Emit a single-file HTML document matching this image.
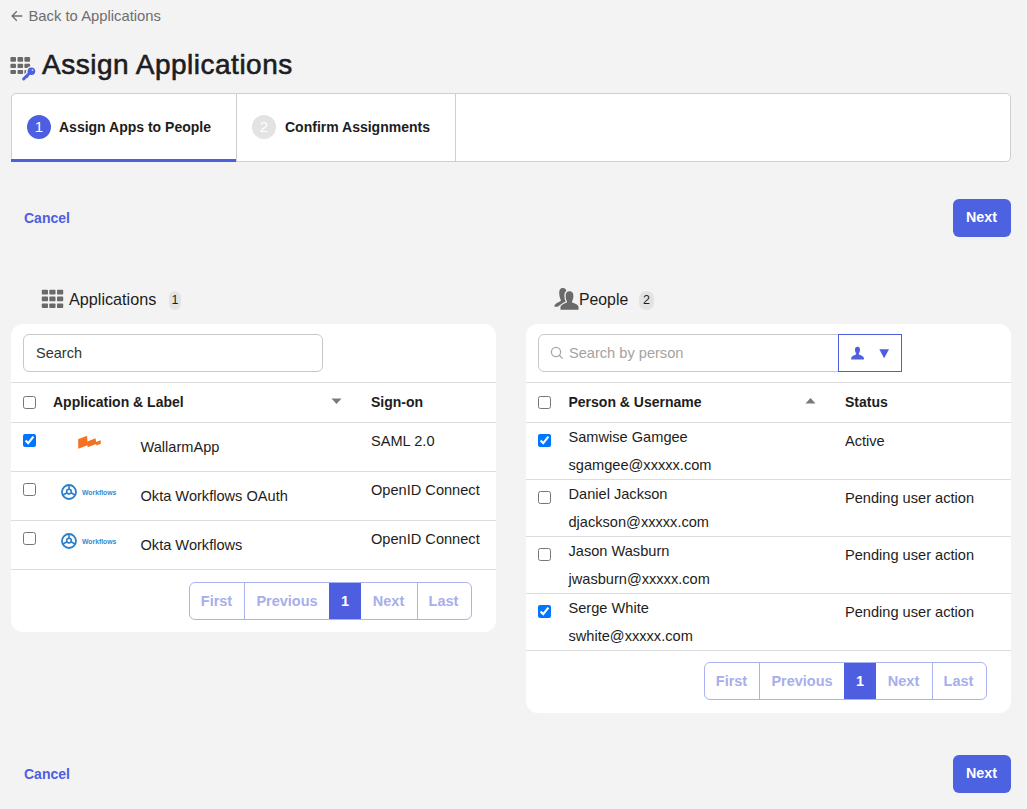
<!DOCTYPE html>
<html><head><meta charset="utf-8">
<style>
*{box-sizing:border-box;margin:0;padding:0}
html,body{width:1027px;height:809px;overflow:hidden;background:#f3f3f3;font-family:"Liberation Sans",sans-serif;color:#1d1d21}
.abs{position:absolute}
.t{position:absolute;white-space:nowrap;line-height:1}
.back{left:28.5px;top:8.5px;font-size:14.8px;color:#6e6e6e}
.title{left:42px;top:51px;font-size:28px;letter-spacing:0.5px;-webkit-text-stroke:0.6px #1d1d21;color:#1d1d21}
.tabs{left:11px;top:93px;width:1000px;height:69px;background:#fff;border:1px solid #cfcfcf;border-radius:5px;overflow:hidden}
.tab1bar{left:0;top:65px;width:225px;height:3px;background:#4e5ee0}
.sep{top:0;width:1px;height:68px;background:#cfcfcf}
.circ{width:24px;height:24px;border-radius:50%;text-align:center;line-height:24px;font-size:15px;font-weight:400;color:#fff}
.tabtxt{font-size:14px;font-weight:700;color:#1d1d21}
.cancel{font-size:14px;font-weight:700;color:#4e5ee0}
.btn{width:58px;height:38px;background:#4d62e0;border-radius:6px;color:#fff;font-size:14.3px;font-weight:700;text-align:center;line-height:37px;padding-right:1px}
.panel{background:#fff;border-radius:12px}
.input{border:1px solid #c8c8c8;border-radius:6px;background:#fff}
.hline{position:absolute;height:1px;background:#dcdcdc}
.th{font-size:14px;font-weight:700;color:#1d1d21}
.td{font-size:14.6px;color:#1d1d21}
.badge{position:absolute;height:19px;border-radius:7px;background:#e3e3e3;font-size:12.5px;text-align:center;line-height:19px;color:#1d1d21}
.pg{position:absolute;height:38px;border:1px solid #aab2f0;border-radius:6px;overflow:hidden;background:#fff}
.pg div{position:absolute;top:0;height:36px;line-height:36px;text-align:center;font-size:14.5px;font-weight:700;color:#a7aeea}
.pg div.s{border-left:1px solid #aab2f0}
.pg div.cur{background:#4e5ee0;color:#fff}
input[type=checkbox]{position:absolute;width:13px;height:13px;margin:0}
</style></head>
<body>
<svg class="abs" style="left:11px;top:10px" width="12" height="12" viewBox="0 0 12 12"><path d="M11.3 6 L1.2 6 M5.8 1.3 L1.1 6 L5.8 10.7" stroke="#6e6e6e" stroke-width="1.3" fill="none"/></svg>
<div class="t back">Back to Applications</div>

<svg class="abs" style="left:6px;top:52px" width="34" height="32" viewBox="0 0 34 32">
  <g fill="#6a6a6a">
    <rect x="4.4" y="5.1" width="5.6" height="4.6" rx="1"/><rect x="11.5" y="5.1" width="5.6" height="4.6" rx="1"/><rect x="18.4" y="5.1" width="5.7" height="4.6" rx="1"/>
    <rect x="4.4" y="11.7" width="5.6" height="4.2" rx="1"/><rect x="11.5" y="11.7" width="5.6" height="4.2" rx="1"/><rect x="18.4" y="11.7" width="5.7" height="4.2" rx="1"/>
    <rect x="4.4" y="18" width="5.6" height="4" rx="1"/><rect x="11.5" y="18" width="5.6" height="4" rx="1"/><rect x="18.4" y="18" width="5.7" height="4" rx="1"/>
  </g>
  <g stroke="#f3f3f3" fill="#f3f3f3">
    <circle cx="25.4" cy="19.3" r="5.4" stroke="none"/>
    <path d="M23.6 21 L17.4 27.2" stroke-width="5.6" stroke-linecap="round"/>
  </g>
  <g fill="#4e5ee0" stroke="#4e5ee0">
    <circle cx="25.4" cy="19.3" r="3.8" stroke="none"/>
    <path d="M23.6 21 L17.6 27" stroke-width="3" stroke-linecap="round"/>
    <path d="M20.6 24 L22 25.4" stroke-width="2"/>
  </g>
  <circle cx="26.5" cy="18.2" r="0.9" fill="#c9cef5"/>
</svg>
<div class="t title">Assign Applications</div>

<div class="abs tabs">
    <div class="abs sep" style="left:224px"></div>
  <div class="abs sep" style="left:443px"></div>
  <div class="abs circ" style="left:15px;top:21px;background:#4e5ee0">1</div>
  <div class="t tabtxt" style="left:47px;top:25.5px">Assign Apps to People</div>
  <div class="abs circ" style="left:240px;top:21px;background:#e3e3e3">2</div>
  <div class="t tabtxt" style="left:273px;top:25.5px">Confirm Assignments</div>
</div>

<div class="abs" style="left:11px;top:159px;width:225px;height:3px;background:#4e5ee0"></div>
<div class="t cancel" style="left:24px;top:211px">Cancel</div>
<div class="abs btn" style="left:953px;top:199px">Next</div>

<!-- Applications header -->
<svg class="abs" style="left:41px;top:289px" width="23" height="20" viewBox="0 0 23 20">
  <g fill="#6a6a6a">
    <rect x="0.8" y="0.8" width="6.2" height="4.8" rx="0.8"/><rect x="8.3" y="0.8" width="6.2" height="4.8" rx="0.8"/><rect x="16" y="0.8" width="6.2" height="4.8" rx="0.8"/>
    <rect x="0.8" y="7.6" width="6.2" height="4.6" rx="0.8"/><rect x="8.3" y="7.6" width="6.2" height="4.6" rx="0.8"/><rect x="16" y="7.6" width="6.2" height="4.6" rx="0.8"/>
    <rect x="0.8" y="14.4" width="6.2" height="4.6" rx="0.8"/><rect x="8.3" y="14.4" width="6.2" height="4.6" rx="0.8"/><rect x="16" y="14.4" width="6.2" height="4.6" rx="0.8"/>
  </g>
</svg>
<div class="t" style="left:69px;top:291px;font-size:16.2px">Applications</div>
<div class="badge" style="left:169px;top:291px;width:12px">1</div>

<!-- People header -->
<svg class="abs" style="left:554px;top:287px" width="25" height="23" viewBox="0 0 25 23">
  <path d="M8.8 0.9 C11.5 0.9 12.6 2.8 12.6 5.3 C12.6 8 11.9 10.2 11.1 11.7 L11.3 12.8 L13 13.8 L3.5 19.8 L0.3 19.8 C0.5 17.2 2.5 16 5.3 14.8 C6.5 14.2 7 13.5 6.7 12.7 C5.9 11.2 5.2 8.5 5.2 5.6 C5.2 2.8 6.3 0.9 8.8 0.9 Z" fill="#6a6a6a"/>
  <path d="M15.5 4.2 C18.2 4.2 19.4 6 19.4 8.7 C19.4 11.2 18.8 13 18 14.5 L18.2 15.6 C20.7 16.6 23.7 17.5 24.5 19.5 L24.5 22.8 L6.5 22.8 L6.5 19.8 C7.3 17.8 10.3 16.6 12.8 15.6 L13 14.5 C12.2 13 11.6 11.2 11.6 8.7 C11.6 6 12.8 4.2 15.5 4.2 Z" fill="#6a6a6a" stroke="#f3f3f3" stroke-width="2.6" paint-order="stroke"/>
</svg>
<div class="t" style="left:579px;top:291.5px;font-size:15.8px">People</div>
<div class="badge" style="left:639px;top:291px;width:15px">2</div>

<!-- left panel -->
<div class="abs panel" style="left:11px;top:324px;width:485px;height:308px"></div>
<div class="abs input" style="left:23px;top:334px;width:300px;height:38px"></div>
<div class="t" style="left:36px;top:345.5px;font-size:14.5px;color:#333">Search</div>
<div class="hline" style="left:11px;top:382px;width:485px"></div>
<div class="hline" style="left:11px;top:422px;width:485px"></div>
<div class="hline" style="left:11px;top:471px;width:485px"></div>
<div class="hline" style="left:11px;top:520px;width:485px"></div>
<div class="hline" style="left:11px;top:569px;width:485px"></div>
<input type="checkbox" style="left:23px;top:396px">
<div class="t th" style="left:53px;top:395px">Application &amp; Label</div>
<svg class="abs" style="left:331px;top:398px" width="11" height="7" viewBox="0 0 11 7"><path d="M0.5 0.5 L10.5 0.5 L5.5 6 Z" fill="#7a7a7a"/></svg>
<div class="t th" style="left:371px;top:395px">Sign-on</div>

<input type="checkbox" checked style="left:23px;top:434px">
<svg class="abs" style="left:72px;top:430px" width="36" height="24" viewBox="0 0 36 24">
  <path d="M6.13 9.29 L15.07 5.78 L15.42 11.57 L23.48 8.24 L24.18 12.09 L28.74 10.16 L28.74 13.67 L24.36 15.6 L24.18 14.02 L15.6 17.35 L15.42 15.25 L6.31 18.75 Z" fill="#f47023"/>
</svg>
<div class="t td" style="left:140.5px;top:440px">WallarmApp</div>
<div class="t td" style="left:371px;top:434.3px">SAML 2.0</div>

<input type="checkbox" style="left:23px;top:483px">
<svg class="abs" style="left:56px;top:478px" width="66" height="28" viewBox="0 0 66 28">
  <g stroke="#2a7fca" fill="none">
    <circle cx="13" cy="14" r="7" stroke-width="1.8"/>
    <circle cx="13" cy="13.6" r="2.3" stroke-width="1.6"/>
    <path d="M13 7 L13 11.3 M11 14.8 L7 17 M15 14.8 L19 17" stroke-width="1.6"/>
  </g>
  <text x="26" y="16.8" font-family="Liberation Sans" font-size="7.4" font-weight="700" fill="#3a88cc" textLength="34.4" lengthAdjust="spacingAndGlyphs">Workflows</text>
</svg>
<div class="t td" style="left:140.5px;top:488.6px">Okta Workflows OAuth</div>
<div class="t td" style="left:371px;top:482.6px">OpenID Connect</div>

<input type="checkbox" style="left:23px;top:532px">
<svg class="abs" style="left:56px;top:527px" width="66" height="28" viewBox="0 0 66 28">
  <g stroke="#2a7fca" fill="none">
    <circle cx="13" cy="14" r="7" stroke-width="1.8"/>
    <circle cx="13" cy="13.6" r="2.3" stroke-width="1.6"/>
    <path d="M13 7 L13 11.3 M11 14.8 L7 17 M15 14.8 L19 17" stroke-width="1.6"/>
  </g>
  <text x="26" y="16.8" font-family="Liberation Sans" font-size="7.4" font-weight="700" fill="#3a88cc" textLength="34.4" lengthAdjust="spacingAndGlyphs">Workflows</text>
</svg>
<div class="t td" style="left:140.5px;top:537.6px">Okta Workflows</div>
<div class="t td" style="left:371px;top:531.6px">OpenID Connect</div>

<div class="pg" style="left:189px;top:582px;width:283px">
  <div style="left:-1px;width:55px">First</div>
  <div class="s" style="left:54px;width:85px">Previous</div>
  <div class="cur" style="left:139px;width:32px">1</div>
  <div style="left:171px;width:57px;padding-right:2px">Next</div>
  <div class="s" style="left:227px;width:55px;padding-right:3px">Last</div>
</div>

<!-- right panel -->
<div class="abs panel" style="left:526px;top:324px;width:485px;height:389px"></div>
<div class="abs input" style="left:538px;top:334px;width:301px;height:38px;border-radius:6px 0 0 6px"></div>
<svg class="abs" style="left:550px;top:346px" width="14" height="14" viewBox="0 0 14 14"><circle cx="6" cy="6" r="4.6" stroke="#a8a8a8" stroke-width="1.3" fill="none"/><path d="M9.3 9.3 L12.6 12.6" stroke="#a8a8a8" stroke-width="1.3"/></svg>
<div class="t" style="left:569px;top:345.6px;font-size:14.6px;color:#a3a3a3">Search by person</div>
<div class="abs" style="left:838px;top:334px;width:64px;height:38px;border:1px solid #4e5ee0;background:#fff"></div>
<svg class="abs" style="left:851px;top:346px" width="14" height="14" viewBox="0 0 14 14"><path d="M6.5 0.8 C8.3 0.8 9 2 9 3.8 C9 5.6 8.3 7 7.8 7.6 C7.7 8.2 8 8.5 9 8.9 C11 9.6 12.6 10.4 12.9 12 L12.9 13.5 L0.2 13.5 L0.2 12 C0.5 10.4 2 9.6 4 8.9 C5 8.5 5.3 8.2 5.2 7.6 C4.7 7 4 5.6 4 3.8 C4 2 4.7 0.8 6.5 0.8 Z" fill="#4e5ee0"/></svg>
<svg class="abs" style="left:879px;top:349px" width="11" height="10" viewBox="0 0 11 10"><path d="M0.3 0.3 L10 0.3 L5.15 9.2 Z" fill="#4e5ee0"/></svg>

<div class="hline" style="left:526px;top:382px;width:485px"></div>
<div class="hline" style="left:526px;top:422px;width:485px"></div>
<div class="hline" style="left:526px;top:479px;width:485px"></div>
<div class="hline" style="left:526px;top:536px;width:485px"></div>
<div class="hline" style="left:526px;top:593px;width:485px"></div>
<div class="hline" style="left:526px;top:650px;width:485px"></div>
<input type="checkbox" style="left:538px;top:396px">
<div class="t th" style="left:568.5px;top:395px">Person &amp; Username</div>
<svg class="abs" style="left:805px;top:397px" width="11" height="7" viewBox="0 0 11 7"><path d="M0.5 6.5 L10.5 6.5 L5.5 1 Z" fill="#7a7a7a"/></svg>
<div class="t th" style="left:845px;top:395.3px">Status</div>

<input type="checkbox" checked style="left:538px;top:434px">
<div class="t td" style="left:568.5px;top:430.2px">Samwise Gamgee</div>
<div class="t td" style="left:568.5px;top:457.5px">sgamgee@xxxxx.com</div>
<div class="t td" style="left:845px;top:434.2px">Active</div>

<input type="checkbox" style="left:538px;top:491px">
<div class="t td" style="left:568.5px;top:487.2px">Daniel Jackson</div>
<div class="t td" style="left:568.5px;top:514.5px">djackson@xxxxx.com</div>
<div class="t td" style="left:845px;top:491.2px">Pending user action</div>

<input type="checkbox" style="left:538px;top:548px">
<div class="t td" style="left:568.5px;top:544.2px">Jason Wasburn</div>
<div class="t td" style="left:568.5px;top:571.5px">jwasburn@xxxxx.com</div>
<div class="t td" style="left:845px;top:548.2px">Pending user action</div>

<input type="checkbox" checked style="left:538px;top:605px">
<div class="t td" style="left:568.5px;top:601.2px">Serge White</div>
<div class="t td" style="left:568.5px;top:628.5px">swhite@xxxxx.com</div>
<div class="t td" style="left:845px;top:605.2px">Pending user action</div>

<div class="pg" style="left:704px;top:662px;width:283px">
  <div style="left:-1px;width:55px">First</div>
  <div class="s" style="left:54px;width:85px">Previous</div>
  <div class="cur" style="left:139px;width:32px">1</div>
  <div style="left:171px;width:57px;padding-right:2px">Next</div>
  <div class="s" style="left:227px;width:55px;padding-right:3px">Last</div>
</div>

<div class="t cancel" style="left:24px;top:767px">Cancel</div>
<div class="abs btn" style="left:953px;top:755px">Next</div>
</body></html>
